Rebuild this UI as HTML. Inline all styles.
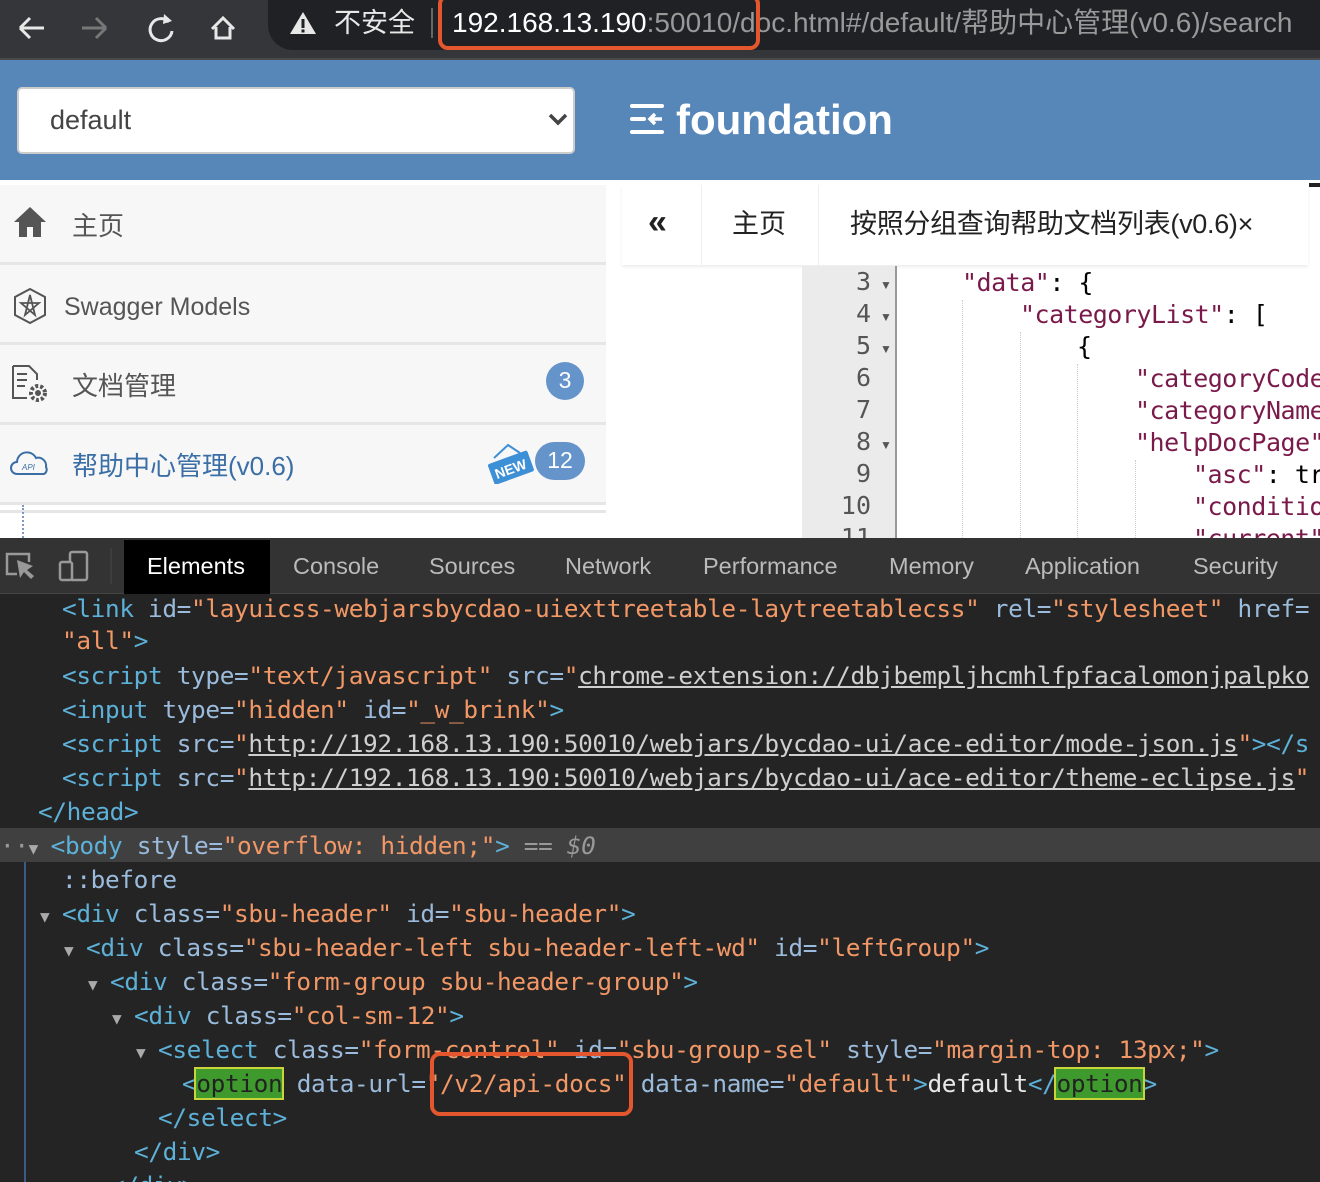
<!DOCTYPE html>
<html><head><meta charset="utf-8"><style>
*{margin:0;padding:0;box-sizing:border-box}
body{width:1320px;height:1182px;overflow:hidden;position:relative;background:#fff;font-family:"Liberation Sans","Noto Sans CJK SC",sans-serif}
.abs{position:absolute}
.dt{position:absolute;left:0;white-space:pre;font-family:"DejaVu Sans Mono","Liberation Mono",monospace;font-size:24.4px;line-height:34px;height:34px;color:#e8e8e8;letter-spacing:-0.35px}
.t{color:#5db0d7}.a{color:#9bbbdc}.v{color:#f29766}.u{color:#cfcfcf;text-decoration:underline}.w{color:#e8e8e8}
.opt{background:#3f9a2e;outline:2px solid #c9d33a;color:#222}
.code{position:absolute;white-space:pre;font-family:"DejaVu Sans Mono","Liberation Mono",monospace;font-size:25px;line-height:32px;height:32px;letter-spacing:-0.5px}
.k{color:#7a1a4a}
.ln{position:absolute;right:0;width:95px;text-align:right;padding-right:26px;font-family:"DejaVu Sans Mono",monospace;font-size:25px;color:#555}
.arr{position:absolute;font-size:12px;color:#555}
.side{position:absolute;left:0;width:606px;background:#f7f7f7;border-bottom:3px solid #e6e6e6}
.tri{color:#aaa;font-size:16px;display:inline-block;width:22px;letter-spacing:0}
</style></head><body>
<div class="abs" style="left:0;top:0;width:1320px;height:58px;background:#35363a"></div>
<div class="abs" style="left:0;top:58px;width:1320px;height:2px;background:#4a4a4a"></div>
<svg class="abs" style="left:14px;top:8px" width="250" height="40" viewBox="0 0 250 40">
<path d="M30 14H6M6 14l10-10M6 14l10 10" stroke="#e8e8e8" stroke-width="3" fill="none" transform="translate(0,6)"/>
<path d="M68 20h24M92 20l-10-10M92 20l-10 10" stroke="#777" stroke-width="3" fill="none"/>
<path d="M155 14a11 11 0 1 0 3 9" stroke="#e8e8e8" stroke-width="3" fill="none"/><path d="M150 6l8 7-9 3z" fill="#e8e8e8"/>
<path d="M198 21l11-11 11 11M202 19v11h14v-11" stroke="#e8e8e8" stroke-width="3" fill="none"/>
</svg>
<div class="abs" style="left:268px;top:0;width:1080px;height:50px;background:#202124;border-radius:0 0 0 25px"></div>
<svg class="abs" style="left:289px;top:10px" width="28" height="26"><path d="M14 2L27 24H1z" fill="#e8e8e8"/><rect x="12.5" y="9" width="3" height="9" fill="#202124"/><rect x="12.5" y="19.5" width="3" height="3" fill="#202124"/></svg>
<div class="abs" style="left:334px;top:4px;font-size:27px;color:#e8e8e8;line-height:38px">不安全</div>
<div class="abs" style="left:431px;top:8px;width:2px;height:30px;background:#666"></div>
<div class="abs" style="left:452px;top:4px;font-size:28px;line-height:38px;color:#999;white-space:nowrap"><span style="color:#fff">192.168.13.190</span>:50010/doc.html#/default/帮助中心管理(v0.6)/search</div>
<div class="abs" style="left:438px;top:-6px;width:322px;height:56px;border:4px solid #e4572e;border-radius:10px"></div>
<div class="abs" style="left:0;top:60px;width:1320px;height:120px;background:#5786b9"></div>
<div class="abs" style="left:17px;top:87px;width:558px;height:67px;background:#fff;border:2px solid #ccc;border-radius:5px"></div>
<div class="abs" style="left:50px;top:102px;font-size:27px;color:#444;line-height:36px">default</div>
<svg class="abs" style="left:548px;top:112px" width="20" height="14"><path d="M2 3l8 8 8-8" stroke="#444" stroke-width="3.5" fill="none"/></svg>
<svg class="abs" style="left:630px;top:103px" width="36" height="32"><path d="M2 3h30M2 16h12M2 29h30" stroke="#fff" stroke-width="4" stroke-linecap="round"/><path d="M32 16H20M25 11l-5 5 5 5" stroke="#fff" stroke-width="3.5" fill="none"/></svg>
<div class="abs" style="left:676px;top:94px;font-size:42px;font-weight:bold;color:#fff;line-height:52px">foundation</div>
<div class="side" style="top:185px;height:80px"></div>
<svg class="abs" style="left:13px;top:206px" width="34" height="34"><path d="M17 1L1 16h5v15h8v-10h6v10h8V16h5z" fill="#555"/></svg>
<div class="abs" style="left:72px;top:207px;font-size:26px;color:#555;line-height:38px">主页</div>
<div class="side" style="top:265px;height:80px"></div>
<svg class="abs" style="left:12px;top:287px" width="36" height="38"><path d="M18 2L33 10v18L18 36 3 28V10z" stroke="#555" stroke-width="2" fill="none"/><path d="M18 8l-5 20 14-12H9l14 12z" stroke="#555" stroke-width="1.8" fill="none"/></svg>
<div class="abs" style="left:64px;top:288px;font-size:25px;color:#555;line-height:38px">Swagger Models</div>
<div class="side" style="top:345px;height:80px"></div>
<svg class="abs" style="left:10px;top:364px" width="40" height="40"><path d="M3 2h16l8 8v6M3 2v32h14" stroke="#555" stroke-width="2" fill="none"/><path d="M7 10h10M7 16h10M7 22h8" stroke="#555" stroke-width="2"/><circle cx="28" cy="29" r="7" stroke="#555" stroke-width="4" stroke-dasharray="3 2" fill="none"/><circle cx="28" cy="29" r="3" fill="#555"/></svg>
<div class="abs" style="left:72px;top:367px;font-size:26px;color:#555;line-height:38px">文档管理</div>
<div class="abs" style="left:546px;top:362px;width:38px;height:38px;border-radius:19px;background:#6494c9;color:#fff;font-size:23px;text-align:center;line-height:36px">3</div>
<div class="side" style="top:425px;height:80px"></div>
<svg class="abs" style="left:10px;top:450px" width="40" height="28"><path d="M7 24a6 6 0 0 1 0-12 10 10 0 0 1 19-4 8 8 0 0 1 10 9 5 5 0 0 1-2 7z" stroke="#3a6ea5" stroke-width="2" fill="none"/><text x="12" y="20" font-size="8" font-style="italic" fill="#3a6ea5" font-family="Liberation Sans">API</text></svg>
<div class="abs" style="left:72px;top:447px;font-size:26px;color:#3a6ea5;line-height:38px">帮助中心管理(v0.6)</div>
<svg class="abs" style="left:486px;top:440px" width="50" height="44"><path d="M8 18L22 5 34 13" stroke="#3d8fd6" stroke-width="2" fill="none"/><g transform="rotate(-20 24 28)"><rect x="4" y="17" width="42" height="22" rx="2" fill="#3d8fd6"/><text x="8" y="34" font-size="14" font-weight="bold" fill="#fff" font-family="Liberation Sans">NEW</text></g></svg>
<div class="abs" style="left:535px;top:442px;width:50px;height:38px;border-radius:19px;background:#6494c9;color:#fff;font-size:23px;text-align:center;line-height:36px">12</div>
<div class="abs" style="left:0;top:510px;width:606px;height:3px;background:#e6e6e6"></div>
<div class="abs" style="left:22px;top:505px;height:33px;border-left:2px dotted #7a9bc0"></div>
<div class="abs" style="left:622px;top:185px;width:686px;height:80px;background:#fff;box-shadow:0 2px 3px rgba(0,0,0,0.08)"></div>
<div class="abs" style="left:701px;top:185px;width:1px;height:80px;background:#eee"></div>
<div class="abs" style="left:818px;top:185px;width:1px;height:80px;background:#eee"></div>
<div class="abs" style="left:1309px;top:183px;width:11px;height:4px;background:#222"></div>
<div class="abs" style="left:648px;top:203px;font-size:34px;color:#222;line-height:38px;font-weight:bold">«</div>
<div class="abs" style="left:732px;top:205px;font-size:27px;color:#222;line-height:38px">主页</div>
<div class="abs" style="left:850px;top:205px;font-size:27px;color:#222;line-height:38px;letter-spacing:-0.3px">按照分组查询帮助文档列表(v0.6)×</div>
<div class="abs" style="left:802px;top:266px;width:95px;height:272px;background:#ebebeb;border-right:2px solid #999"></div>
<div class="ln" style="left:802px;top:267px">3</div><div class="arr" style="left:880px;top:278px">▼</div>
<div class="ln" style="left:802px;top:299px">4</div><div class="arr" style="left:880px;top:310px">▼</div>
<div class="ln" style="left:802px;top:331px">5</div><div class="arr" style="left:880px;top:342px">▼</div>
<div class="ln" style="left:802px;top:363px">6</div>
<div class="ln" style="left:802px;top:395px">7</div>
<div class="ln" style="left:802px;top:427px">8</div><div class="arr" style="left:880px;top:438px">▼</div>
<div class="ln" style="left:802px;top:459px">9</div>
<div class="ln" style="left:802px;top:491px">10</div>
<div class="ln" style="left:802px;top:523px">11</div>
<div class="abs" style="left:962px;top:300px;height:238px;border-left:1px dotted #ccc"></div>
<div class="abs" style="left:1020px;top:332px;height:206px;border-left:1px dotted #ccc"></div>
<div class="abs" style="left:1077px;top:364px;height:174px;border-left:1px dotted #ccc"></div>
<div class="abs" style="left:1135px;top:460px;height:78px;border-left:1px dotted #ccc"></div>
<div class="code" style="left:962px;top:267px"><span class="k">"data"</span>: {</div>
<div class="code" style="left:1020px;top:299px"><span class="k">"categoryList"</span>: [</div>
<div class="code" style="left:1077px;top:331px">{</div>
<div class="code" style="left:1135px;top:363px"><span class="k">"categoryCode</span></div>
<div class="code" style="left:1135px;top:395px"><span class="k">"categoryName</span></div>
<div class="code" style="left:1135px;top:427px"><span class="k">"helpDocPage"</span></div>
<div class="code" style="left:1193px;top:459px"><span class="k">"asc"</span>: tr</div>
<div class="code" style="left:1193px;top:491px"><span class="k">"conditio</span></div>
<div class="code" style="left:1193px;top:523px"><span class="k">"current"</span></div>
<div class="abs" style="left:0;top:538px;width:1320px;height:644px;background:#242424;overflow:hidden">
<div class="abs" style="left:0;top:0;width:1320px;height:56px;background:#333;border-bottom:1px solid #444"></div>
<svg class="abs" style="left:5px;top:12px" width="85" height="32"><path d="M12 24H2V4h22v8" stroke="#999" stroke-width="2.5" fill="none"/><path d="M12 10l3 18 4-6 7 7 3-3-7-6 6-4z" fill="#999"/><rect x="65" y="2" width="17" height="28" rx="2" stroke="#999" stroke-width="2.5" fill="none"/><rect x="55" y="12" width="12" height="18" rx="2" stroke="#999" stroke-width="2.5" fill="#333"/></svg>
<div class="abs" style="left:110px;top:10px;width:2px;height:36px;background:#3d3d3d"></div>
<div class="abs" style="left:124px;top:2px;width:146px;height:54px;background:#000"></div>
<div class="abs" style="left:0;top:12px;width:1320px;font-size:23.5px;line-height:32px;color:#bbb;white-space:nowrap">
<span class="abs" style="left:147px;color:#fff">Elements</span><span class="abs" style="left:293px">Console</span><span class="abs" style="left:429px">Sources</span><span class="abs" style="left:565px">Network</span><span class="abs" style="left:703px">Performance</span><span class="abs" style="left:889px">Memory</span><span class="abs" style="left:1025px">Application</span><span class="abs" style="left:1193px">Security</span></div>
<div class="abs" style="left:0;top:290px;width:1320px;height:34px;background:#404040"></div>
<div class="abs" style="left:24px;top:324px;height:330px;border-left:2px solid #3a5a8a"></div>
<div class="dt" style="top:54px;left:62px"><span class="t">&lt;link </span><span class="a">id=</span><span class="v">"layuicss-webjarsbycdao-uiexttreetable-laytreetablecss"</span> <span class="a">rel=</span><span class="v">"stylesheet"</span> <span class="a">href=</span></div>
<div class="dt" style="top:86px;left:62px"><span class="v">"all"</span><span class="t">&gt;</span></div>
<div class="dt" style="top:121px;left:62px"><span class="t">&lt;script </span><span class="a">type=</span><span class="v">"text/javascript"</span> <span class="a">src=</span><span class="v">"</span><span class="u">chrome-extension://dbjbempljhcmhlfpfacalomonjpalpko</span></div>
<div class="dt" style="top:155px;left:62px"><span class="t">&lt;input </span><span class="a">type=</span><span class="v">"hidden"</span> <span class="a">id=</span><span class="v">"_w_brink"</span><span class="t">&gt;</span></div>
<div class="dt" style="top:189px;left:62px"><span class="t">&lt;script </span><span class="a">src=</span><span class="v">"</span><span class="u">http://192.168.13.190:50010/webjars/bycdao-ui/ace-editor/mode-json.js</span><span class="v">"</span><span class="t">&gt;&lt;/s</span></div>
<div class="dt" style="top:223px;left:62px"><span class="t">&lt;script </span><span class="a">src=</span><span class="v">"</span><span class="u">http://192.168.13.190:50010/webjars/bycdao-ui/ace-editor/theme-eclipse.js</span><span class="v">"</span></div>
<div class="dt" style="top:257px;left:38px"><span class="t">&lt;/head&gt;</span></div>
<div class="dt" style="top:291px;left:0"><span style="color:#999">··</span><span class="tri">▼</span><span class="t">&lt;body </span><span class="a">style=</span><span class="v">"overflow: hidden;"</span><span class="t">&gt;</span> <span style="color:#999">== <i>$0</i></span></div>
<div class="dt" style="top:325px;left:62px"><span class="a">::before</span></div>
<div class="dt" style="top:359px;left:40px"><span class="tri">▼</span><span class="t">&lt;div </span><span class="a">class=</span><span class="v">"sbu-header"</span> <span class="a">id=</span><span class="v">"sbu-header"</span><span class="t">&gt;</span></div>
<div class="dt" style="top:393px;left:64px"><span class="tri">▼</span><span class="t">&lt;div </span><span class="a">class=</span><span class="v">"sbu-header-left sbu-header-left-wd"</span> <span class="a">id=</span><span class="v">"leftGroup"</span><span class="t">&gt;</span></div>
<div class="dt" style="top:427px;left:88px"><span class="tri">▼</span><span class="t">&lt;div </span><span class="a">class=</span><span class="v">"form-group sbu-header-group"</span><span class="t">&gt;</span></div>
<div class="dt" style="top:461px;left:112px"><span class="tri">▼</span><span class="t">&lt;div </span><span class="a">class=</span><span class="v">"col-sm-12"</span><span class="t">&gt;</span></div>
<div class="dt" style="top:495px;left:136px"><span class="tri">▼</span><span class="t">&lt;select </span><span class="a">class=</span><span class="v">"form-control"</span> <span class="a">id=</span><span class="v">"sbu-group-sel"</span> <span class="a">style=</span><span class="v">"margin-top: 13px;"</span><span class="t">&gt;</span></div>
<div class="dt" style="top:529px;left:182px"><span class="t">&lt;</span><span class="opt">option</span> <span class="a">data-url=</span><span class="v">"/v2/api-docs"</span> <span class="a">data-name=</span><span class="v">"default"</span><span class="t">&gt;</span>default<span class="t">&lt;/</span><span class="opt">option</span><span class="t">&gt;</span></div>
<div class="dt" style="top:563px;left:158px"><span class="t">&lt;/select&gt;</span></div>
<div class="dt" style="top:597px;left:134px"><span class="t">&lt;/div&gt;</span></div>
<div class="dt" style="top:631px;left:110px"><span class="t">&lt;/div&gt;</span></div>
<div class="abs" style="left:430px;top:514px;width:203px;height:64px;border:4px solid #e4572e;border-radius:10px"></div>
</div>
</body></html>
